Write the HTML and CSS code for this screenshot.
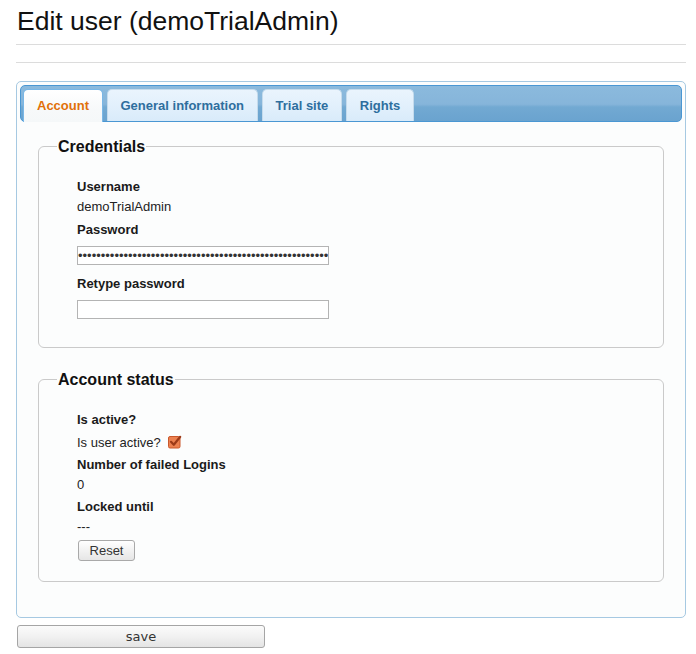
FILE: index.html
```html
<!DOCTYPE html>
<html>
<head>
<meta charset="utf-8">
<title>Edit user</title>
<link rel="stylesheet" href="styles.css">
</head>
<body>
<h1 class="page-title">Edit user (demoTrialAdmin)</h1>
<div class="rule"></div>
<div class="tabs">
  <ul class="tab-nav">
    <li class="tab active">Account</li>
    <li class="tab">General information</li>
    <li class="tab">Trial site</li>
    <li class="tab">Rights</li>
  </ul>
  <div class="panel">
    <fieldset class="group group-cred">
      <legend>Credentials</legend>
      <div class="lbl">Username</div>
      <div class="val">demoTrialAdmin</div>
      <div class="lbl mt8">Password</div>
      <input class="field" type="password" value="abcdefghijklmnopqrstuvwxyzabcdefghijklmnopqrstuvwxyzabcdef">
      <div class="lbl mt11">Retype password</div>
      <input class="field" type="password" value="">
    </fieldset>
    <fieldset class="group group-status">
      <legend>Account status</legend>
      <div class="lbl">Is active?</div>
      <div class="val mt8">Is user active?<span class="check"><svg width="14" height="14" viewBox="0 0 14 14"><rect x="0.5" y="1.5" width="11.5" height="11.5" rx="1.5" fill="#ec8150" stroke="#c9582c"/><path d="M3 6.8 L5.8 9.8 L12.2 1.8" fill="none" stroke="#9c3a18" stroke-width="2.2" stroke-linecap="round" stroke-linejoin="round"/></svg></span></div>
      <div class="lbl mt7">Number of failed Logins</div>
      <div class="val">0</div>
      <div class="lbl mt7">Locked until</div>
      <div class="val">---</div>
      <button class="btn-reset" type="button">Reset</button>
    </fieldset>
  </div>
</div>
<button class="btn-save" type="button">save</button>
</body>
</html>
```
FILE: styles.css
```css
html, body {
  margin: 0;
  padding: 0;
  background: #ffffff;
}
body {
  padding: 0 10px 0 16px;
  font-family: "Liberation Sans", Arial, sans-serif;
  font-size: 13px;
  color: #222;
}
.page-title {
  margin: 0;
  padding: 4px 0 6px 1px;
  font-size: 26.5px;
  line-height: 34px;
  font-weight: normal;
  color: #111;
  border-bottom: 1px solid #dcdcdc;
}
.rule {
  height: 17px;
  border-bottom: 1px solid #dcdcdc;
  margin-bottom: 18px;
}
.tabs {
  border: 1px solid #a6c9e2;
  border-radius: 5px;
  background: #fcfdfd;
  padding: 3px;
}
.tab-nav {
  list-style: none;
  margin: 0;
  padding: 3px 1px 0 2px;
  height: 37px;
  box-sizing: border-box;
  display: flex;
  align-items: flex-end;
  border: 1px solid #4a97d3;
  border-radius: 5px;
  background: linear-gradient(to bottom, #8bbadd 0%, #86b5da 52%, #72a9d2 60%, #6aa3cf 100%);
}
.tab {
  height: 32px;
  box-sizing: border-box;
  margin-right: 3.5px;
  padding: 8px 13px 0 13px;
  line-height: 15px;
  font-weight: bold;
  color: #2e6e9e;
  border: 1px solid #c5dbec;
  border-bottom: none;
  border-radius: 5px 5px 0 0;
  background: linear-gradient(to bottom, #eaf4fd 0%, #e2f0fc 50%, #d9ebfa 100%);
}
.tab.active {
  height: 33px;
  margin-bottom: -1px;
  color: #e17009;
  border-color: #79b7e7;
  background: linear-gradient(to bottom, #ffffff 0%, #f7f9fa 60%, #f5f8f9 100%);
  position: relative;
}
.panel {
  padding: 15px 18px 32px 18px;
}
.group {
  margin: 0;
  border: 1px solid #cacaca;
  border-radius: 6px;
  padding: 23px 20px 28px 38px;
}
.group legend {
  margin-left: -20px;
  padding: 0 1px;
  font-size: 16px;
  line-height: 19px;
  font-weight: bold;
  color: #111;
}
.group-status {
  margin-top: 22px;
  padding-bottom: 20px;
}
.lbl {
  font-weight: bold;
  line-height: 15px;
  color: #1a1a1a;
}
.val {
  margin-top: 5px;
  line-height: 15px;
  color: #222;
}
.mt7 { margin-top: 7px; }
.mt8 { margin-top: 8px; }
.mt11 { margin-top: 11px; }
.field {
  display: block;
  margin-top: 9px;
  width: 252px;
  height: 19px;
  box-sizing: border-box;
  padding: 0;
  border: 1px solid #b4b4b4;
  background: #fff;
  font-family: "Liberation Sans", Arial, sans-serif;
  font-size: 13px;
  color: #333;
  outline: none;
}
.check {
  display: inline-block;
  width: 14px;
  height: 14px;
  margin-left: 7px;
  vertical-align: -2px;
}
.check svg {
  display: block;
}
.btn-reset {
  display: block;
  margin-top: 6px;
  margin-left: 1px;
  width: 57px;
  height: 21px;
  padding: 0;
  border: 1px solid #a9a9a9;
  border-radius: 3px;
  background: linear-gradient(to bottom, #ffffff 0%, #f2f2f2 50%, #e6e6e6 100%);
  font-family: "Liberation Sans", Arial, sans-serif;
  font-size: 13px;
  color: #333;
}
.btn-save {
  display: block;
  margin-top: 7px;
  margin-left: 1px;
  width: 248px;
  height: 23px;
  padding: 0;
  border: 1px solid #a5a5a5;
  border-radius: 3px;
  background: linear-gradient(to bottom, #fbfbfb 0%, #f1f1f1 50%, #e4e4e4 100%);
  font-family: "DejaVu Sans", sans-serif;
  font-size: 13px;
  color: #333;
}
```
